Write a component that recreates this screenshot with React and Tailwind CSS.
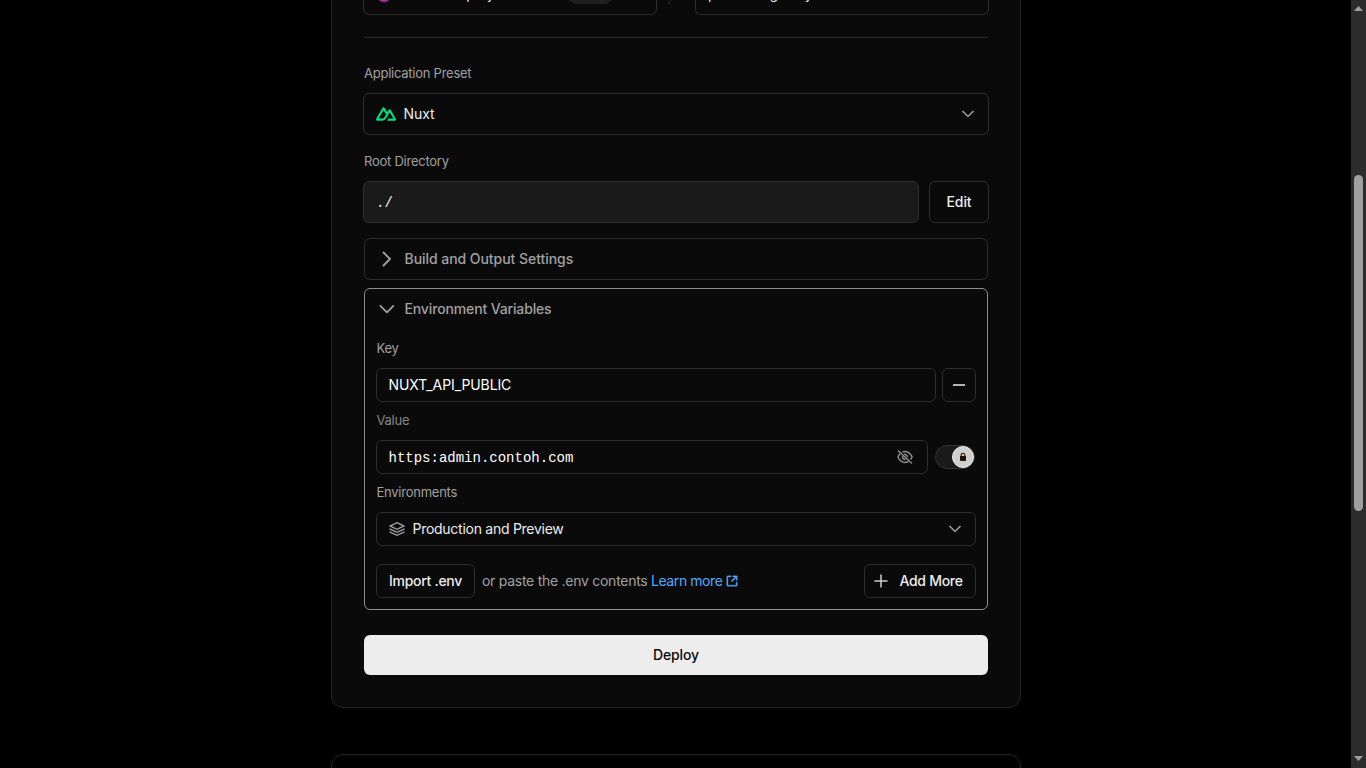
const Chevron = ({ className = "" }) => (
  <svg width="16" height="16" viewBox="0 0 16 16" fill="#a1a1a1" className={className}>
    <path
      fillRule="evenodd"
      clipRule="evenodd"
      d="M14.0607 5.49999L13.5303 6.03032L8.7071 10.8535C8.31658 11.2441 7.68341 11.2441 7.29289 10.8535L2.46966 6.03032L1.93933 5.49999L2.99999 4.43933L3.53032 4.96966L7.99999 9.43933L12.4697 4.96966L13 4.43933L14.0607 5.49999Z"
    />
  </svg>
);

const Caret = ({ open }) => (
  <svg
    width="24"
    height="24"
    viewBox="0 0 24 24"
    fill="none"
    stroke="#a1a1a1"
    strokeWidth="1.8"
    strokeLinecap="round"
    strokeLinejoin="round"
    className="shrink-0"
  >
    <path d={open ? "M6.4 8.8l6.5 6.5 6.5-6.5" : "M9.5 18.5L16 12 9.5 5.5"} />
  </svg>
);

const NuxtLogo = () => (
  <svg width="20" height="20" viewBox="0 0 900 900" fill="#00dc82">
    <path d="M504.908 750H839.476C850.103 750.001 860.542 747.229 869.745 741.963C878.948 736.696 886.589 729.121 891.9 719.999C897.211 710.876 900.005 700.529 900 689.997C899.995 679.465 897.193 669.12 891.873 660.002L667.187 274.289C661.876 265.169 654.237 257.595 645.036 252.329C635.835 247.064 625.398 244.291 614.773 244.291C604.149 244.291 593.711 247.064 584.511 252.329C575.31 257.595 567.67 265.169 562.36 274.289L504.908 372.979L392.581 179.993C387.266 170.874 379.623 163.301 370.42 158.036C361.216 152.772 350.777 150 340.151 150C329.525 150 319.086 152.772 309.883 158.036C300.679 163.301 293.036 170.874 287.721 179.993L8.12649 660.002C2.80743 669.12 0.00462935 679.465 0 689.997C-0.00461789 700.529 2.78909 710.876 8.10015 719.999C13.4112 729.121 21.0523 736.696 30.255 741.963C39.4576 747.229 49.8973 750.001 60.524 750H270.538C353.748 750 415.112 713.775 457.336 643.101L559.849 467.145L614.757 372.979L779.547 655.834H559.849L504.908 750ZM267.114 655.737L120.551 655.704L340.249 278.586L449.87 467.145L376.474 593.175C348.433 639.03 316.577 655.737 267.114 655.737Z" />
  </svg>
);

const EyeOff = () => (
  <svg width="16" height="16" viewBox="0 0 16 16" fill="none" stroke="#8f8f8f" strokeWidth="1.5">
    <path d="M1 1.5L15 14.5" />
    <path d="M5.6 3C6.35 2.66 7.15 2.5 8 2.5C11 2.5 13.4 4.6 15.1 8C14.7 8.8 14.2 9.6 13.5 10.4" />
    <path d="M3.2 4.8C2.3 5.7 1.5 6.8 0.9 8C2.6 11.4 5 13.5 8 13.5C9.2 13.5 10.3 13.15 11.3 12.5" />
    <path d="M7.2 5.4C8.9 5.1 10.5 6.3 10.6 8.2M5.6 7.1C5.1 8.8 6.4 10.7 8.7 10.6" />
  </svg>
);

const Layers = () => (
  <svg width="16" height="16" viewBox="0 0 16 16" fill="none" stroke="#a1a1a1" strokeWidth="1.4">
    <path d="M8 1.7L15 5L8 8.3L1 5L8 1.7Z" />
    <path d="M0.5 7.9L8 11.3L15.5 7.9" />
    <path d="M0.5 10.9L8 14.3L15.5 10.9" />
  </svg>
);

const Lock = () => (
  <svg width="8" height="10" viewBox="0 0 8 10">
    <path d="M2.2 4.5V3a1.8 1.8 0 0 1 3.6 0v1.5" fill="none" stroke="#1f1400" strokeWidth="1.1" />
    <path d="M1 4h6v4a1 1 0 0 1-1 1H2a1 1 0 0 1-1-1z" fill="#1f1400" />
  </svg>
);

const External = () => (
  <svg width="12" height="12" viewBox="0 0 16 16" fill="#52a8ff" stroke="#52a8ff" strokeWidth="0.5">
    <path
      fillRule="evenodd"
      clipRule="evenodd"
      d="M13.5 10.25V13.25C13.5 13.3881 13.3881 13.5 13.25 13.5H2.75C2.61193 13.5 2.5 13.3881 2.5 13.25L2.5 2.75C2.5 2.61193 2.61193 2.5 2.75 2.5H5.75H6.5V1H5.75H2.75C1.7835 1 1 1.7835 1 2.75V13.25C1 14.2165 1.7835 15 2.75 15H13.25C14.2165 15 15 14.2165 15 13.25V10.25V9.5H13.5V10.25ZM9 1H9.75H14.2495C14.6637 1 14.9995 1.33579 14.9995 1.75V6.25V7H13.4995V6.25V3.56066L8.53033 8.53033L8 9.06066L6.93934 8L7.46967 7.46967L12.4388 2.5H9.75H9V1Z"
    />
  </svg>
);

const Label = ({ children, className = "" }) => (
  <p className={`text-[13px] leading-5 tracking-[-0.25px] ${className}`}>{children}</p>
);

const box = "flex items-center rounded-md border border-[#2e2e2e]";

export default function App() {
  return (
    <div className="flex h-screen overflow-hidden bg-black font-['Inter','Liberation_Sans',sans-serif] text-sm text-[#ededed]">
      <main className="flex flex-1 flex-col items-center overflow-hidden pl-px">
        <div className="-mt-[60px] w-[690px] shrink-0 rounded-xl border border-[#242424] bg-[#0a0a0a] px-8 pt-8 pb-8">
          {/* Team and project name */}
          <div className="-mx-px flex justify-between">
            <div className={`${box} h-[42px] w-[294px] pl-3`}>
              <span className="size-4 shrink-0 rounded-full bg-[#a62fa2]" />
              <span className="ml-[13px] w-[161px] shrink-0 whitespace-nowrap">contoh&apos;s projects</span>
              <span className="-mt-1 flex h-6 w-[49px] shrink-0 items-center justify-center rounded-full bg-[#1f1f1f] text-xs">
                Hobby
              </span>
            </div>
            <svg width="10" height="22" viewBox="0 0 10 22" fill="none" stroke="#2e2e2e" className="mt-[10px] mr-[7px]">
              <path d="M9.5 1L0.5 21.5" />
            </svg>
            <div className={`${box} h-[42px] w-[294px] pl-3`}>portfolio-galaxy</div>
          </div>

          <hr className="mt-[22px] border-[#2e2e2e]" />

          <Label className="mt-[25px] text-[#a1a1a1]">Application Preset</Label>
          <div className={`${box} -mx-px mt-[10px] h-[42px] px-3`}>
            <NuxtLogo />
            <span className="ml-[7.5px] tracking-[-0.1px]">Nuxt</span>
            <Chevron className="ml-auto" />
          </div>

          <Label className="mt-4 text-[#a1a1a1]">Root Directory</Label>
          <div className="-mx-px mt-[10px] flex gap-[10px]">
            <div className={`${box} h-[42px] flex-1 bg-[#1a1a1a] px-3 pt-[2px] font-['Liberation_Mono',monospace]`}>
              ./
            </div>
            <button className={`${box} h-[42px] w-[60px] justify-center font-medium tracking-[-0.1px]`}>Edit</button>
          </div>

          <div className={`${box} mt-[15px] h-[42px] gap-[6.5px] pl-[9px] font-medium tracking-[-0.05px] text-[#a1a1a1]`}>
            <Caret />
            Build and Output Settings
          </div>

          {/* Environment variables */}
          <section className="mt-2 rounded-md border border-[#8f8f8f] px-[11px] pb-[11px]">
            <div className="-ml-[2px] flex h-10 items-center gap-[6.5px] font-medium tracking-[-0.14px] text-[#a1a1a1]">
              <Caret open />
              Environment Variables
            </div>

            <Label className="mt-[9px] pl-[0.5px] text-[#a1a1a1]">Key</Label>
            <div className="mt-[10px] flex gap-[6px]">
              <div className={`${box} h-[34px] flex-1 px-[11.5px] tracking-[-0.1px] text-white`}>NUXT_API_PUBLIC</div>
              <button className={`${box} size-[34px] justify-center`}>
                <span className="h-[2px] w-3 bg-[#b4b4b4]" />
              </button>
            </div>

            <Label className="mt-2 pl-[0.5px] text-[#878787]">Value</Label>
            <div className="mt-[10px] flex items-center">
              <div className={`${box} h-[34px] w-[552px] justify-between pr-[14px] pl-[11.5px]`}>
                <span className="pt-[2px] font-['Liberation_Mono',monospace] text-white">https:admin.contoh.com</span>
                <EyeOff />
              </div>
              <div className="ml-[7px] flex h-6 w-10 items-center justify-end rounded-full border border-[#333] bg-[#1a1a1a]">
                <span className="flex size-[22px] items-center justify-center rounded-full border border-[#ededed] bg-[#cfcfcf]">
                  <Lock />
                </span>
              </div>
            </div>

            <Label className="mt-2 pl-[0.5px] text-[#a1a1a1]">Environments</Label>
            <div className={`${box} mt-[10px] h-[34px] px-3`}>
              <Layers />
              <span className="ml-[7.5px] tracking-[-0.27px]">Production and Preview</span>
              <Chevron className="ml-auto" />
            </div>

            <div className="mt-[18px] flex items-center">
              <button className={`${box} h-[34px] w-[99px] justify-center font-medium tracking-[-0.3px]`}>
                Import .env
              </button>
              <span className="ml-[7px] tracking-[-0.27px] text-[#a1a1a1]">or paste the .env contents</span>
              <a href="#" className="ml-[3.5px] flex items-center gap-1 tracking-[-0.42px] text-[#52a8ff]">
                Learn more
                <External />
              </a>
              <button className={`${box} ml-auto h-[34px] w-[112px] pl-2 font-medium tracking-[-0.3px]`}>
                <svg width="16" height="16" viewBox="0 0 16 16" stroke="#d0d0d0" strokeWidth="1.5">
                  <path d="M8 1.5V14.5M1.5 8H14.5" />
                </svg>
                <span className="ml-[10.5px]">Add More</span>
              </button>
            </div>
          </section>

          <button className="mt-[25px] h-10 w-full rounded-md bg-[#ededed] font-medium tracking-[-0.1px] text-[#0a0a0a]">
            Deploy
          </button>
        </div>

        <div className="mt-[46px] h-40 w-[690px] shrink-0 rounded-xl border border-[#242424] bg-black" />
      </main>

      {/* Scrollbar */}
      <div className="flex w-[15px] shrink-0 flex-col items-center bg-[#2c2c2c]">
        <svg width="9" height="5" viewBox="0 0 9 5" fill="#9f9f9f" className="mt-[6px]">
          <path d="M4.5 0L9 5H0z" />
        </svg>
        <span className="mt-[164px] h-[336px] w-[9px] rounded-full bg-[#9f9f9f]" />
        <svg width="9" height="5" viewBox="0 0 9 5" fill="#9f9f9f" className="mt-auto mb-[7px]">
          <path d="M4.5 5L9 0H0z" />
        </svg>
      </div>
    </div>
  );
}
